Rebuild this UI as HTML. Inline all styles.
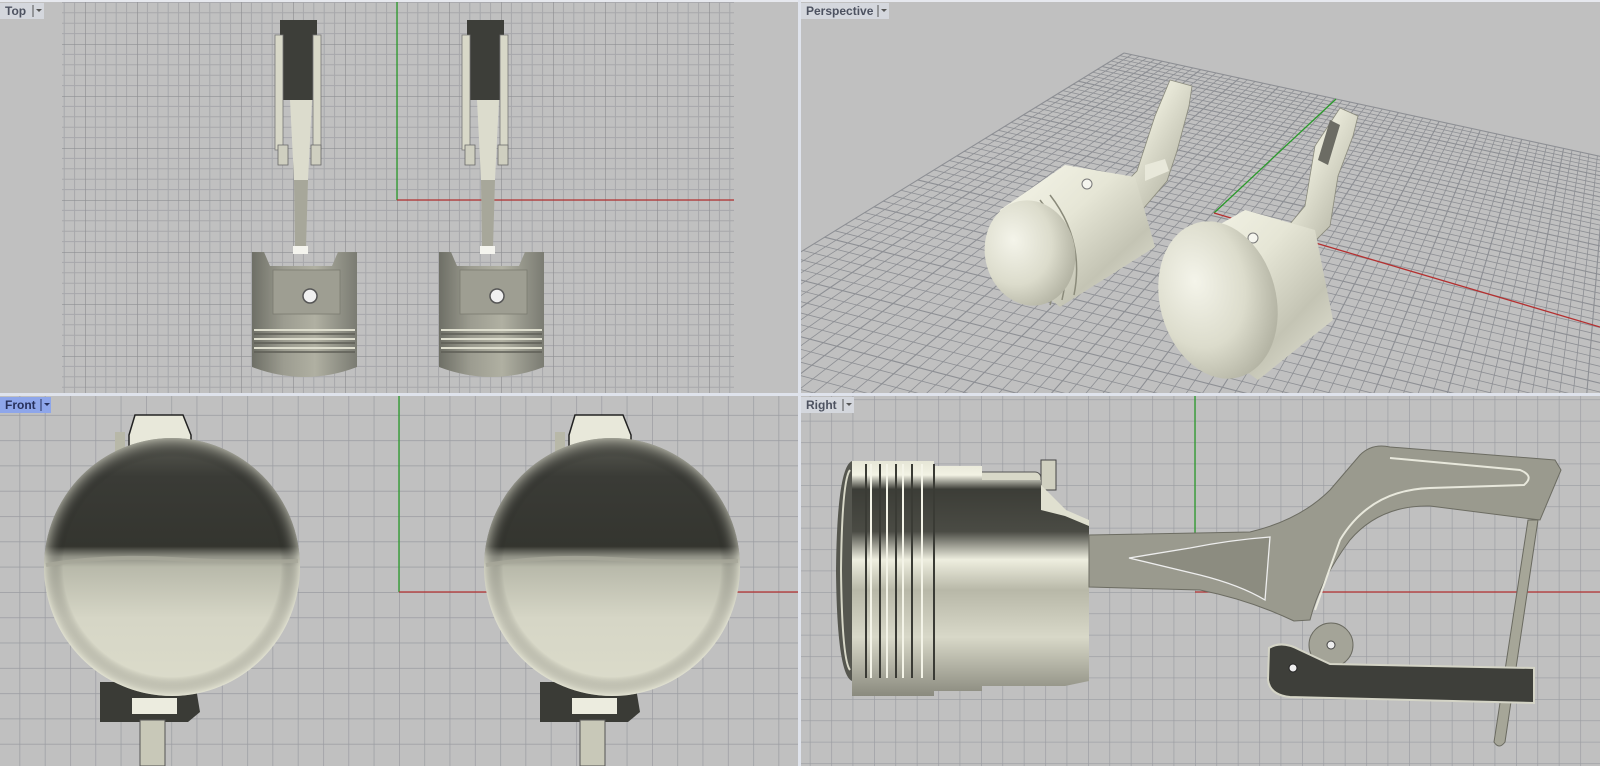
<!DOCTYPE html>
<html><head><meta charset="utf-8"><style>
html,body{margin:0;padding:0;background:#fff;width:1600px;height:772px;overflow:hidden}
svg{display:block;position:absolute;left:0;top:0}
.lbl{font-family:"Liberation Sans",sans-serif;font-size:12px;font-weight:bold;fill:#4d5260}
</style></head><body>
<svg id="s" width="1600" height="772" viewBox="0 0 1600 772" xmlns="http://www.w3.org/2000/svg">
<defs>
<pattern id="gTop" x="397" y="200" width="52" height="52" patternUnits="userSpaceOnUse">
<path d="M0 0V52M10.4 0V52M20.8 0V52M31.2 0V52M41.6 0V52M0 0H52M0 10.4H52M0 20.8H52M0 31.2H52M0 41.6H52" stroke="#a7a8ab" stroke-width="1" fill="none"/>
<path d="M0 0V52M0 0H52" stroke="#8e8f92" stroke-width="1.3" fill="none"/>
</pattern>
<pattern id="gFront" x="399" y="592" width="25.3" height="25.3" patternUnits="userSpaceOnUse">
<path d="M0 0V25.3M0 0H25.3" stroke="#9a9ca1" stroke-width="1.4" fill="none"/>
</pattern>
<pattern id="gRight" x="1195" y="592" width="21.4" height="21.4" patternUnits="userSpaceOnUse">
<path d="M0 0V21.4M0 0H21.4" stroke="#9a9ca1" stroke-width="1.3" fill="none"/>
</pattern>
<linearGradient id="faceF" x1="0" y1="0" x2="0" y2="1">
<stop offset="0" stop-color="#5a5b53"/><stop offset="0.15" stop-color="#3a3b36"/><stop offset="0.42" stop-color="#34352f"/>
<stop offset="0.46" stop-color="#8f9085"/><stop offset="0.5" stop-color="#b8b9aa"/><stop offset="0.7" stop-color="#d6d6c6"/><stop offset="1" stop-color="#dcdccb"/>
</linearGradient>
<radialGradient id="rimF" cx="0.5" cy="0.5" r="0.5">
<stop offset="0.85" stop-color="#000" stop-opacity="0"/><stop offset="1" stop-color="#e8e8d8" stop-opacity="0.5"/>
</radialGradient>
<linearGradient id="bodyR" x1="0" y1="0" x2="0" y2="1">
<stop offset="0" stop-color="#e6e6d6"/><stop offset="0.06" stop-color="#f2f2e4"/><stop offset="0.12" stop-color="#3c3d37"/>
<stop offset="0.3" stop-color="#4a4b44"/><stop offset="0.42" stop-color="#eeeedf"/><stop offset="0.55" stop-color="#b8b8a8"/>
<stop offset="0.75" stop-color="#d8d8c8"/><stop offset="1" stop-color="#8a8a7e"/>
</linearGradient>
<linearGradient id="pistT" x1="0" y1="0" x2="1" y2="0">
<stop offset="0" stop-color="#6e6f66"/><stop offset="0.3" stop-color="#9c9c90"/><stop offset="0.6" stop-color="#b0b0a2"/><stop offset="1" stop-color="#7a7b72"/>
</linearGradient>
<linearGradient id="cream" x1="0" y1="0" x2="1" y2="1">
<stop offset="0" stop-color="#f6f6ea"/><stop offset="0.4" stop-color="#e6e6d6"/><stop offset="0.7" stop-color="#c4c4b4"/><stop offset="1" stop-color="#e8e8da"/>
</linearGradient>
<radialGradient id="faceP" cx="0.35" cy="0.35" r="0.7">
<stop offset="0" stop-color="#f4f4ea"/><stop offset="0.6" stop-color="#dcdccc"/><stop offset="1" stop-color="#b4b4a4"/>
</radialGradient>
<clipPath id="cP"><rect x="801" y="0" width="799" height="393"/></clipPath>
</defs>

<rect x="0" y="0" width="1600" height="772" fill="#c0c0c0"/>
<rect x="62" y="0" width="672" height="393" fill="url(#gTop)"/>
<rect x="0" y="396" width="798" height="370" fill="url(#gFront)"/>
<rect x="801" y="396" width="799" height="370" fill="url(#gRight)"/>
<g id="pg" clip-path="url(#cP)"></g>

<line x1="397" y1="0" x2="397" y2="200" stroke="#2a9a2a" stroke-width="1.3"/>
<line x1="397" y1="200" x2="734" y2="200" stroke="#b43030" stroke-width="1.3"/>

<g id="tp">
<rect x="280" y="20" width="37" height="80" fill="#3d3e39"/>
<path d="M275 35h8v115h-8zM313 35h8v115h-8z" fill="#d8d8c8" stroke="#777" stroke-width="0.8"/>
<path d="M278 145h10v20h-10zM311 145h10v20h-10z" fill="#cfcfc0" stroke="#666" stroke-width="0.8"/>
<path d="M290 100h22l-4 80h-14z" fill="#dcdccd"/>
<path d="M294 180h14l-2 68h-11z" fill="#a7a79a"/>
<rect x="293" y="246" width="15" height="8" fill="#f4f4ee"/>
<path d="M252 252h12l6 14h62l6-14h19v115q-52 20-105 0z" fill="url(#pistT)"/>
<rect x="273" y="270" width="67" height="44" fill="#9e9e92" stroke="#7a7a70" stroke-width="0.8"/>
<circle cx="310" cy="296" r="7" fill="#f0f0f0" stroke="#555" stroke-width="1.5"/>
<g stroke="#dedece" stroke-width="2"><line x1="254" y1="330" x2="355" y2="330"/><line x1="254" y1="339" x2="355" y2="339"/><line x1="254" y1="348" x2="355" y2="348"/></g>
<g stroke="#5e5e56" stroke-width="1.5"><line x1="254" y1="334" x2="355" y2="334"/><line x1="254" y1="343" x2="355" y2="343"/><line x1="254" y1="352" x2="355" y2="352"/></g>
</g>
<use href="#tp" transform="translate(187,0)"/>

<line x1="1214" y1="213" x2="1336" y2="99" stroke="#2a9a2a" stroke-width="1.3"/>
<line x1="1214" y1="213" x2="1600" y2="327" stroke="#b43030" stroke-width="1.3"/>
<path d="M1170 80l22 6-3 20-12 45-10 30-30 35-25-20 25-25 18-55z" fill="url(#cream)" stroke="#8a8a7c" stroke-width="0.8"/>
<path d="M1145 165l20-6 4 12-24 10z" fill="#e8e8da"/>
<path d="M1000 210l65-45 70 12 20 70-95 60-50-40z" fill="url(#cream)"/>
<g stroke="#8a8a7a" stroke-width="1.5" fill="none"><path d="M1030 205q35 45 20 100"/><path d="M1040 200q35 45 22 100"/><path d="M1050 195q35 45 24 100"/></g>
<circle cx="1087" cy="184" r="5" fill="#f5f5ee" stroke="#777"/>
<ellipse cx="1030" cy="253" rx="45" ry="53" fill="url(#faceP)" transform="rotate(-12 1030 253)"/>
<path d="M1340 108l18 8-5 20-15 40-8 50-30 30-20-20 25-30 10-60z" fill="url(#cream)" stroke="#8a8a7c" stroke-width="0.8"/>
<path d="M1330 120l10 5-12 40-10-5z" fill="#6c6c64"/>
<path d="M1175 250l70-40 70 20 18 90-75 60-70-50z" fill="url(#cream)"/>
<g stroke="#8a8a7a" stroke-width="1.5" fill="none"><path d="M1195 260q45 50 30 110"/><path d="M1207 253q45 50 32 112"/><path d="M1219 246q45 50 34 114"/></g>
<circle cx="1253" cy="238" r="5" fill="#f5f5ee" stroke="#777"/>
<ellipse cx="1218" cy="300" rx="58" ry="80" fill="url(#faceP)" transform="rotate(-15 1218 300)"/>

<line x1="399" y1="396" x2="399" y2="592" stroke="#2a9a2a" stroke-width="1.3"/>
<line x1="399" y1="592" x2="798" y2="592" stroke="#b43030" stroke-width="1.3"/>
<g id="fp">
<path d="M135 415h48l8 20v12h-62v-12z" fill="#e8e8da" stroke="#222" stroke-width="1.5"/>
<rect x="115" y="432" width="10" height="20" fill="#b8b8a8"/>
<path d="M100 682h95l5 30-12 10h-88z" fill="#3a3b36"/>
<rect x="132" y="698" width="45" height="16" fill="#ececdf"/>
<rect x="140" y="720" width="25" height="46" fill="#c8c8b8" stroke="#555" stroke-width="1"/>
<ellipse cx="172" cy="567" rx="128" ry="129" fill="url(#faceF)"/>
<ellipse cx="172" cy="567" rx="128" ry="129" fill="url(#rimF)"/>
<path d="M46 565q60-10 126-6t126 2" stroke="#a8a89a" stroke-width="4" fill="none" opacity="0.8"/>
</g>
<use href="#fp" transform="translate(440,0)"/>

<line x1="1195" y1="396" x2="1195" y2="535" stroke="#2a9a2a" stroke-width="1.3"/>
<line x1="1195" y1="592" x2="1600" y2="592" stroke="#b43030" stroke-width="1.3"/>
<rect x="961" y="472" width="80" height="16" rx="6" fill="#d8d8c8" stroke="#555" stroke-width="1"/>
<rect x="1041" y="460" width="15" height="30" fill="#d0d0c0" stroke="#444" stroke-width="1"/>
<rect x="961" y="656" width="80" height="14" fill="#c8c8b8"/>
<rect x="1046" y="650" width="12" height="30" fill="#bdbdae" stroke="#444" stroke-width="1"/>
<path d="M1041 485l25 25 23 10v140l-25 8h-25z" fill="#e0e0d0"/>
<path d="M852 461h82v5h48v14h59v30l24 6 24 10v155l-24 5h-83v5h-48v5h-82z" fill="url(#bodyR)"/>
<path d="M852 461q-15 6-16 110q1 104 16 110z" fill="#55564f"/>
<path d="M850 470q-8 10-9 100q1 90 9 100" stroke="#d8d8c8" stroke-width="2" fill="none"/>
<g stroke="#3a3b35" stroke-width="2"><line x1="866" y1="464" x2="866" y2="678"/><line x1="880" y1="464" x2="880" y2="678"/><line x1="896" y1="464" x2="896" y2="678"/><line x1="912" y1="464" x2="912" y2="678"/><line x1="934" y1="464" x2="934" y2="680"/></g>
<g stroke="#f4f4e8" stroke-width="2"><line x1="871" y1="464" x2="871" y2="678"/><line x1="887" y1="464" x2="887" y2="678"/><line x1="903" y1="464" x2="903" y2="678"/><line x1="922" y1="464" x2="922" y2="678"/></g>
<path d="M1089 535L1250 532Q1300 520 1330 490L1360 455Q1372 443 1390 447L1555 460L1561 470L1540 520L1430 506Q1380 505 1350 540Q1320 580 1310 620L1294 621Q1250 600 1200 590L1089 587Z" fill="#9a9a8e" stroke="#6c6c62" stroke-width="1"/>
<path d="M1129 558L1190 548Q1230 540 1270 537L1265 600Q1240 585 1200 575Z" fill="#8c8c80" stroke="#eee" stroke-width="1.3"/>
<path d="M1390 458L1520 470Q1535 476 1524 485L1430 488Q1370 490 1340 540L1315 610" stroke="#e8e8dc" stroke-width="2" fill="none"/>
<path d="M1528 520h10l-33 222q-6 8-11 0z" fill="#a6a698" stroke="#6a6a60" stroke-width="1"/>
<circle cx="1331" cy="645" r="22" fill="#a4a498" stroke="#6a6a60"/>
<circle cx="1331" cy="645" r="4" fill="#eee" stroke="#444"/>
<path d="M1269 648Q1282 640 1300 650L1330 664L1534 668V703L1290 697Q1270 695 1268 680Z" fill="#3e3f3a" stroke="#d4d4c6" stroke-width="2"/>
<circle cx="1293" cy="668" r="4" fill="#eee" stroke="#222"/>

<rect x="0" y="0" width="1600" height="2" fill="#e6e8ee"/>
<rect x="798" y="0" width="3" height="772" fill="#dfe3ec"/>
<rect x="0" y="393" width="1600" height="3" fill="#dfe3ec"/>
<rect x="0" y="766" width="1600" height="6" fill="#ffffff"/>

<rect x="0" y="3" width="44" height="16" fill="#d4d7dd"/>
<text class="lbl" x="5" y="15">Top</text>
<line x1="33" y1="5" x2="33" y2="17" stroke="#555"/><path d="M36 9h6l-3 3z" fill="#555"/>

<rect x="801" y="3" width="88" height="16" fill="#d4d7dd"/>
<text class="lbl" x="806" y="15">Perspective</text>
<line x1="878" y1="5" x2="878" y2="17" stroke="#555"/><path d="M881 9h6l-3 3z" fill="#555"/>

<rect x="0" y="397" width="51" height="16" fill="#8ea6ea"/>
<text class="lbl" x="5" y="409" style="fill:#27305a">Front</text>
<line x1="41" y1="399" x2="41" y2="411" stroke="#27305a"/><path d="M44 403h6l-3 3z" fill="#27305a"/>

<rect x="801" y="397" width="53" height="16" fill="#d4d7dd"/>
<text class="lbl" x="806" y="409">Right</text>
<line x1="843" y1="399" x2="843" y2="411" stroke="#555"/><path d="M846 403h6l-3 3z" fill="#555"/>
</svg>
<script>
(function(){
 function H(p){
  var x0=p[0][0],y0=p[0][1],x1=p[1][0],y1=p[1][1],x2=p[2][0],y2=p[2][1],x3=p[3][0],y3=p[3][1];
  var dx1=x1-x2,dx2=x3-x2,dy1=y1-y2,dy2=y3-y2,sx=x0-x1+x2-x3,sy=y0-y1+y2-y3;
  var den=dx1*dy2-dx2*dy1;
  var g=(sx*dy2-dx2*sy)/den,h=(dx1*sy-sx*dy1)/den;
  var a=x1-x0+g*x1,b=x3-x0+h*x3,c=x0,d=y1-y0+g*y1,e=y3-y0+h*y3,f=y0;
  return function(u,v){var w=g*u+h*v+1;return [(a*u+b*v+c)/w,(d*u+e*v+f)/w];};
 }
 var m=H([[1124,53],[1640,165],[1640,700],[560,400]]);
 var N=64,s='';
 for(var i=0;i<=N;i++){var t=i/N;
  var A=m(t,0),B=m(t,1),C=m(0,t),D=m(1,t);
  var sw=(i%5==0)?1.1:0.8;
  s+='<line x1="'+A[0]+'" y1="'+A[1]+'" x2="'+B[0]+'" y2="'+B[1]+'" stroke="#8d8f94" stroke-width="'+sw+'"/>';
  s+='<line x1="'+C[0]+'" y1="'+C[1]+'" x2="'+D[0]+'" y2="'+D[1]+'" stroke="#8d8f94" stroke-width="'+sw+'"/>';
 }
 document.getElementById('pg').innerHTML=s;
})();
</script>
</body></html>
